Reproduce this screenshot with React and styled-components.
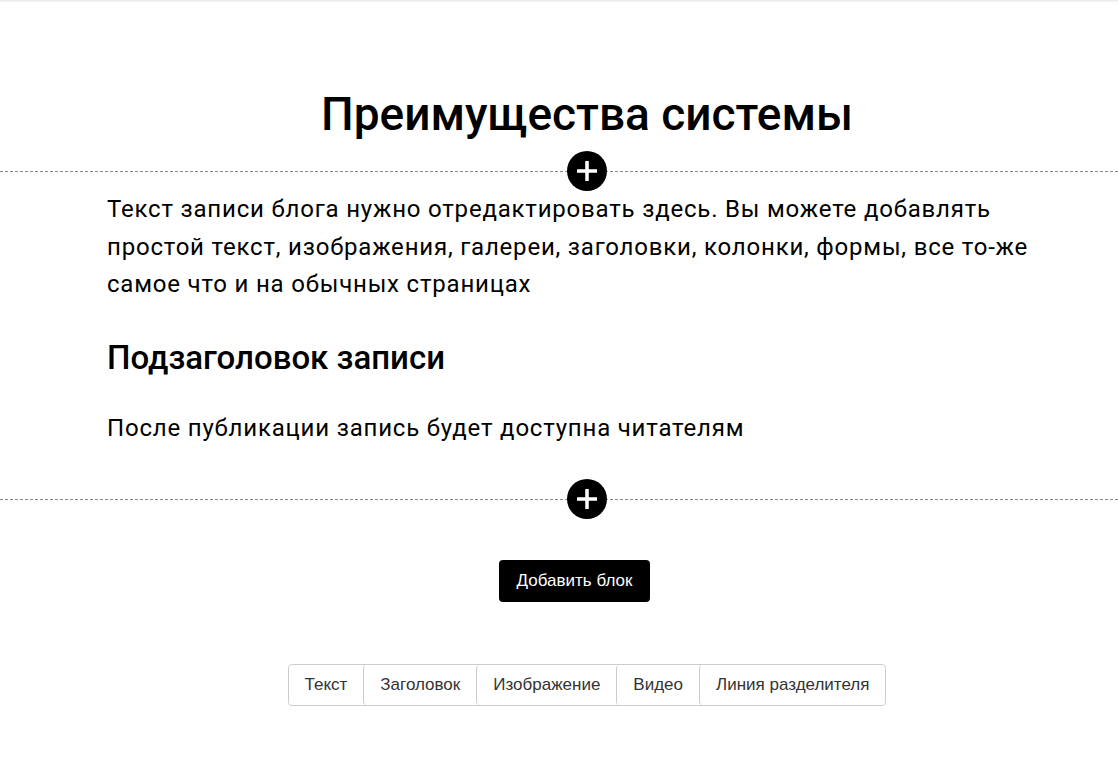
import React from "react";
import styled, { createGlobalStyle } from "styled-components";

const GlobalStyle = createGlobalStyle`
  *, *:before, *:after {
    box-sizing: border-box;
  }
  html, body {
    margin: 0;
    padding: 0;
    background: #ffffff;
  }
  body {
    font-family: Roboto, "Noto Sans", sans-serif;
    color: #000;
  }
`;

const Page = styled.div`
  min-height: 757px;
  box-shadow: inset 0 3px 3px -2px rgba(0, 0, 0, 0.12);
  padding-top: 82px;
`;

const Column = styled.div`
  margin-left: 107px;
  width: 960px;
`;

const Title = styled.h1`
  margin: 0 0 5px;
  text-align: center;
  font-size: 46px;
  font-weight: 500;
  line-height: 64px;
`;

const Divider = styled.div`
  position: relative;
  height: 40px;
  margin-top: ${(p) => p.$top || 0}px;
  &:before {
    content: "";
    position: absolute;
    left: 0;
    right: 0;
    top: 50%;
    border-top: 1px dashed #8a8a8a;
  }
`;

const DividerInner = styled(Column)`
  display: flex;
  justify-content: center;
`;

const AddCircle = styled.button`
  position: relative;
  width: 40px;
  height: 40px;
  border-radius: 50%;
  border: none;
  background: #000;
  padding: 0;
  display: flex;
  align-items: center;
  justify-content: center;
  cursor: pointer;
`;

const Body = styled.p`
  margin: ${(p) => p.$top || 0}px 0 0;
  font-size: 24px;
  letter-spacing: 0.8px;
  line-height: 37.5px;
`;

const SubTitle = styled.h2`
  margin: 34px 0 0;
  font-size: 33px;
  font-weight: 500;
  line-height: 40px;
`;

const ButtonRow = styled.div`
  display: flex;
  justify-content: center;
  padding-top: 41px;
  margin-left: -25px;
`;

const AddButton = styled.button`
  height: 42px;
  padding: 0 18px;
  background: #000;
  color: #fff;
  border: none;
  border-radius: 4px;
  font-family: "Liberation Sans", Arial, sans-serif;
  font-size: 17px;
`;

const Group = styled.div`
  display: flex;
  justify-content: center;
  padding-top: 62px;
`;

const GroupInner = styled.div`
  display: flex;
  border: 1px solid #cccccc;
  border-radius: 4px;
`;

const GroupItem = styled.button`
  height: 40px;
  padding: 0 16px;
  background: #fff;
  border: none;
  border-left: ${(p) => (p.$first ? "none" : "1px solid #cccccc")};
  border-radius: 4px;
  color: #333;
  font-family: "Liberation Sans", Arial, sans-serif;
  font-size: 17px;
`;

const Plus = () => (
  <svg width="20" height="20" viewBox="0 0 20 20">
    <path d="M10 0v20M0 10h20" stroke="#fff" strokeWidth="3.5" />
  </svg>
);

const items = ["Текст", "Заголовок", "Изображение", "Видео", "Линия разделителя"];

export default function App() {
  return (
    <Page>
      <GlobalStyle />
      <Column>
        <Title>Преимущества системы</Title>
      </Column>
      <Divider>
        <DividerInner>
          <AddCircle><Plus /></AddCircle>
        </DividerInner>
      </Divider>
      <Column>
        <Body>
          Текст записи блога нужно отредактировать здесь. Вы можете добавлять простой текст, изображения, галереи, заголовки, колонки, формы, все то-же самое что и на обычных страницах
        </Body>
        <SubTitle>Подзаголовок записи</SubTitle>
        <Body $top={32}>После публикации запись будет доступна читателям</Body>
      </Column>
      <Divider $top={32}>
        <DividerInner>
          <AddCircle><Plus /></AddCircle>
        </DividerInner>
      </Divider>
      <Column>
        <ButtonRow>
          <AddButton>Добавить блок</AddButton>
        </ButtonRow>
        <Group>
          <GroupInner>
            {items.map((t, i) => (
              <GroupItem key={t} $first={i === 0}>{t}</GroupItem>
            ))}
          </GroupInner>
        </Group>
      </Column>
    </Page>
  );
}
